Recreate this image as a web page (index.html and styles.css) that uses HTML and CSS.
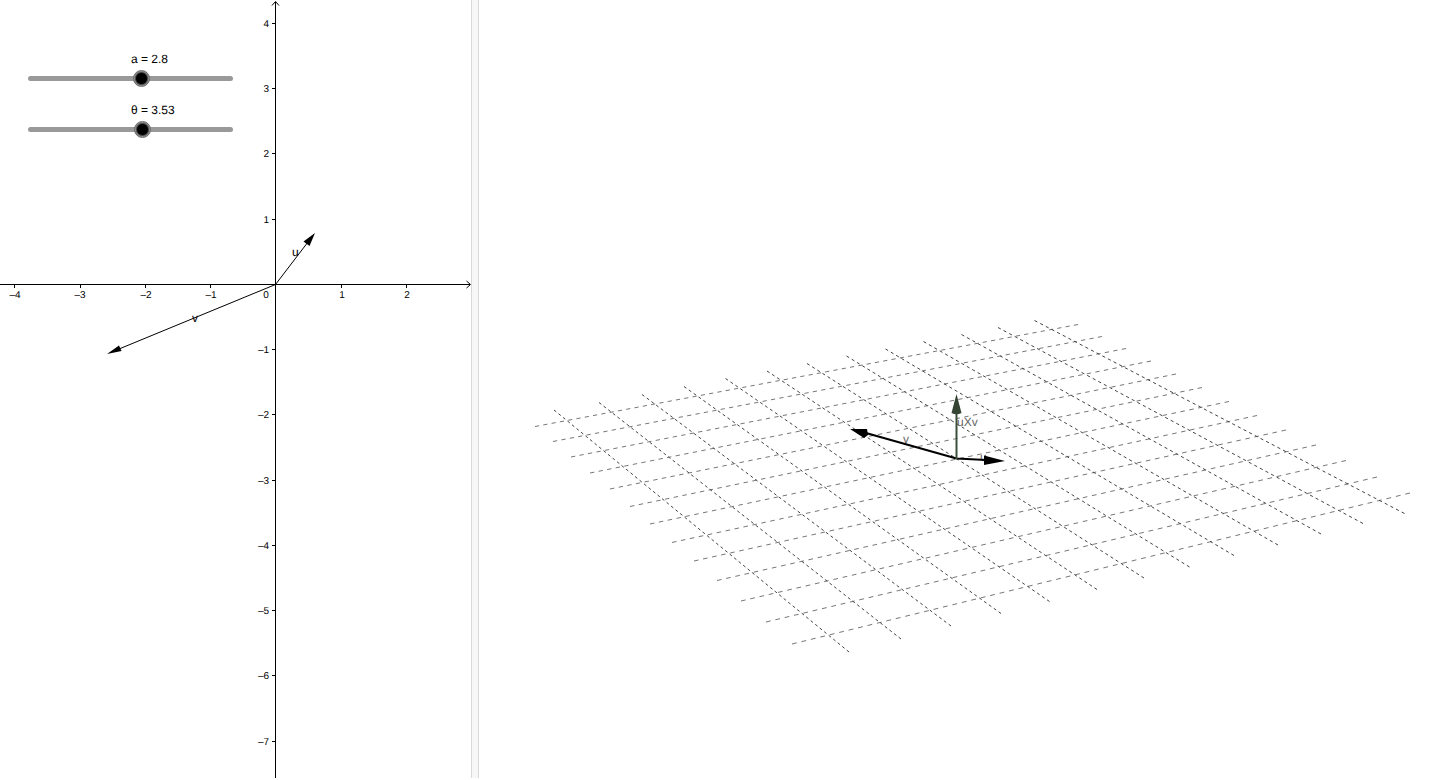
FILE: index.html
```html
<!DOCTYPE html>
<html lang="en">
<head>
    <meta charset="UTF-8">
    <meta name="viewport" content="width=device-width, initial-scale=1.0">
    <title>Cross Product</title>
    <link rel="stylesheet" href="styles.css">
</head>
<body>
    <main class="applet">
        <section class="view-2d">
            <svg class="graph" viewBox="0 0 471 778" preserveAspectRatio="xMinYMin meet">
                <!-- axes -->
                <g class="axis">
                    <path d="M0 284.5H470M275.5 2V778"/>
                    <path d="M466.5 281L470.5 284.5L466.5 288M272 5.5L275.5 1.5L279 5.5"/>
                    <path d="M14.5 285v3M80.5 285v3M145.5 285v3M210.5 285v3M341.5 285v3M406.5 285v3"/>
                    <path d="M272 23.5h3M272 88.5h3M272 153.5h3M272 219.5h3M272 349.5h3M272 414.5h3M272 480.5h3M272 545.5h3M272 610.5h3M272 675.5h3M272 741.5h3"/>
                </g>
                <g class="num num-x">
                    <text x="15" y="298">–4</text>
                    <text x="80" y="298">–3</text>
                    <text x="146" y="298">–2</text>
                    <text x="211" y="298">–1</text>
                    <text x="266" y="298">0</text>
                    <text x="342" y="298">1</text>
                    <text x="407" y="298">2</text>
                </g>
                <g class="num num-y">
                    <text x="269" y="27">4</text>
                    <text x="269" y="92">3</text>
                    <text x="269" y="157">2</text>
                    <text x="269" y="223">1</text>
                    <text x="269" y="353">–1</text>
                    <text x="269" y="418">–2</text>
                    <text x="269" y="484">–3</text>
                    <text x="269" y="549">–4</text>
                    <text x="269" y="614">–5</text>
                    <text x="269" y="679">–6</text>
                    <text x="269" y="745">–7</text>
                </g>
                <!-- vectors u and v -->
                <path class="vector" d="M275.5 284.5L308 242M275.5 284.5L119 349"/>
                <path class="head" d="M315 233L303.5 241.5L309.5 246Z"/>
                <path class="head" d="M107 354L119 345.5L121.5 351Z"/>
                <text class="name" x="292" y="256">u</text>
                <text class="name" x="192" y="322">v</text>
            </svg>
            <form class="sliders">
                <label for="a">a = 2.8</label>
                <input type="range" id="a" min="0" max="5" step="0.1" value="2.8">
                <label for="theta">θ = 3.53</label>
                <input type="range" id="theta" min="0" max="6.28" step="0.01" value="3.53">
            </form>
        </section>

        <div class="divider"></div>

        <section class="view-3d">
            <svg class="graph" viewBox="479 0 957 778" preserveAspectRatio="xMinYMin meet">
                <!-- xy plane grid -->
                <g class="grid grid-x">
                    <path pathLength="655" d="M535 426.5L1078 324.5"/>
                    <path pathLength="655" d="M553 441.5L1102 336.5"/>
                    <path pathLength="655" d="M571 457L1126 348.5"/>
                    <path pathLength="655" d="M590 473L1151 361"/>
                    <path pathLength="655" d="M610 489L1176 374"/>
                    <path pathLength="655" d="M630 506.5L1202 387.5"/>
                    <path pathLength="655" d="M650 524L1229 401.5"/>
                    <path pathLength="655" d="M672 542.5L1257 415.5"/>
                    <path pathLength="655" d="M694 561L1286 430"/>
                    <path pathLength="655" d="M717 580.5L1316 445"/>
                    <path pathLength="655" d="M741 601L1346 460.5"/>
                    <path pathLength="655" d="M766 622L1377 477"/>
                    <path pathLength="655" d="M792 644L1410 493"/>
                </g>
                <g class="grid grid-y">
                    <path pathLength="655" d="M554 410L849 652"/>
                    <path pathLength="655" d="M599 402.5L901 639"/>
                    <path pathLength="655" d="M642 394.5L951 626"/>
                    <path pathLength="655" d="M684 386.5L1001 613.5"/>
                    <path pathLength="655" d="M725.5 378.5L1049.5 601.5"/>
                    <path pathLength="655" d="M767 371L1097 589.5"/>
                    <path pathLength="655" d="M807 363.5L1144 578"/>
                    <path pathLength="655" d="M846.5 356L1189.5 567"/>
                    <path pathLength="655" d="M885.5 349L1234 555.5"/>
                    <path pathLength="655" d="M923.5 341.5L1278 545"/>
                    <path pathLength="655" d="M961.5 334.5L1321 534"/>
                    <path pathLength="655" d="M998 327.5L1363 523.5"/>
                    <path pathLength="655" d="M1034.5 320.5L1404.5 513.5"/>
                </g>
                <!-- u, v and their cross product -->
                <text class="name faded" x="957" y="426">uXv</text>
                <text class="name faded" x="980" y="461">u</text>
                <text class="name faded" x="903" y="443">v</text>
                <path class="shaft" d="M956.5 458.5L866 433M956.5 458.5L986 460"/>
                <path class="head" d="M850 429L867 429L868 435L864 438Z"/>
                <path class="head" d="M1005 461L984 455.5V465Z"/>
                <path class="shaft cross" d="M956.5 459V412"/>
                <path class="head cross" d="M956.5 394L951.5 413Q956.5 415.5 961.5 413Z"/>
            </svg>
        </section>
    </main>
</body>
</html>
```

FILE: styles.css
```css
body {
    margin: 0;
    background-color: #fff;
    color: #000;
    font-family: "Liberation Sans", Arial, sans-serif;
    font-size: 12px;
}

.applet {
    display: grid;
    grid-template-columns: 471fr 8px 957fr;
    height: calc(100vh - 2px);
}

.view-2d {
    position: relative;
    overflow: hidden;
}

.view-3d {
    overflow: hidden;
}

.graph {
    display: block;
    width: 100%;
    height: 100%;
    text-rendering: geometricPrecision;
}

.divider {
    box-sizing: border-box;
    background-color: #f7f7f7;
    border-left: 1px solid #d9d9d9;
    border-right: 1px solid #d9d9d9;
    cursor: col-resize;
}

.axis {
    fill: none;
    stroke: #000;
    stroke-width: 1px;
}

.num {
    font-size: 10px;
}

.num-x {
    text-anchor: middle;
}

.num-y {
    text-anchor: end;
}

.vector {
    stroke: #000;
    stroke-width: 1px;
}

.head {
    fill: #000;
}

.name {
    font-size: 12px;
}

/* sliders lie over the graph */
.sliders {
    position: absolute;
    top: 52px;
    left: 28px;
    width: 205px;
    text-rendering: geometricPrecision;
}

.sliders label {
    display: block;
    height: 14px;
    line-height: 14px;
    padding-left: 103px;
}

.sliders input {
    -webkit-appearance: none;
    appearance: none;
    display: block;
    width: 100%;
    height: 19px;
    margin: 3px 0 15px;
    background: none;
    cursor: pointer;
}

.sliders input::-webkit-slider-runnable-track {
    height: 5px;
    border-radius: 3px;
    background-color: #999;
}

.sliders input::-webkit-slider-thumb {
    -webkit-appearance: none;
    box-sizing: border-box;
    width: 17px;
    height: 17px;
    margin-top: -6px;
    border: 1px solid #6b6b6b;
    border-radius: 50%;
    background: radial-gradient(circle, #000 5px, #8c8c8c 7px);
}

.grid {
    fill: none;
    stroke-width: 1px;
    stroke-dasharray: 5 5;
}

.grid-x {
    stroke: #777;
}

.grid-y {
    stroke: #444;
}

.faded {
    fill: #666;
}

.shaft {
    fill: none;
    stroke: #000;
    stroke-width: 2px;
}

.shaft.cross {
    stroke: #3c4e3c;
}

.head.cross {
    fill: #334433;
}
```
